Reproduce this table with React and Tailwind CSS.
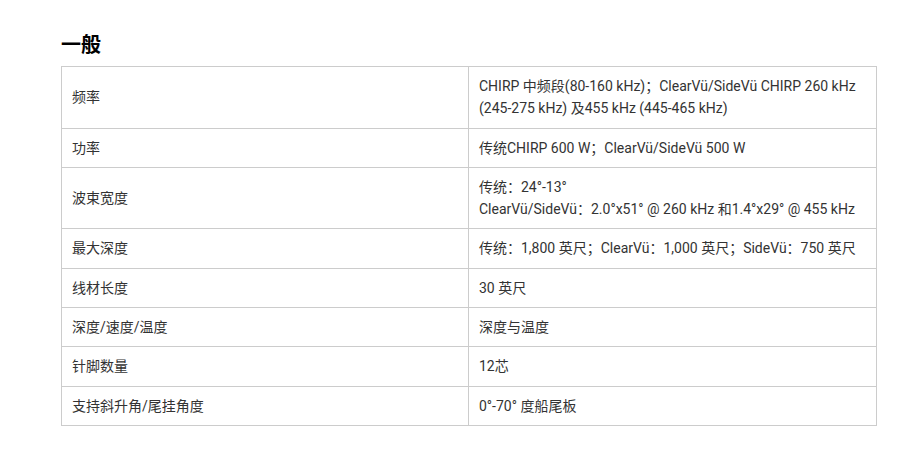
import React from 'react'

const rows = [
  ['频率', ['CHIRP 中频段(80-160 kHz)；ClearVü/SideVü CHIRP 260 kHz', '(245-275 kHz) 及455 kHz (445-465 kHz)']],
  ['功率', ['传统CHIRP 600 W；ClearVü/SideVü 500 W']],
  ['波束宽度', ['传统：24°-13°', 'ClearVü/SideVü：2.0°x51° @ 260 kHz 和1.4°x29° @ 455 kHz']],
  ['最大深度', ['传统：1,800 英尺；ClearVü：1,000 英尺；SideVü：750 英尺']],
  ['线材长度', ['30 英尺']],
  ['深度/速度/温度', ['深度与温度']],
  ['针脚数量', ['12芯']],
  ['支持斜升角/尾挂角度', ['0°-70° 度船尾板']],
]

export default function App() {
  return (
    <div className="w-[898px] h-[469px] bg-white pt-[31px] pl-[61px] font-['Roboto','Noto_Sans_CJK_SC',sans-serif]">
      <h2 className="text-[20px] font-bold text-black leading-[28px] mb-[7px]">一般</h2>
      <table className="w-[816px] table-fixed border-collapse text-[14px] text-[#333] leading-[22.3px]">
        <tbody>
          {rows.map(([label, lines]) => (
            <tr key={label}>
              <td className="w-[407px] border border-[#ccc] px-[10px] py-[8px] align-middle">{label}</td>
              <td className="border border-[#ccc] px-[10px] py-[8px] align-middle">
                {lines.map((l, i) => (
                  <div key={i}>{l}</div>
                ))}
              </td>
            </tr>
          ))}
        </tbody>
      </table>
    </div>
  )
}
